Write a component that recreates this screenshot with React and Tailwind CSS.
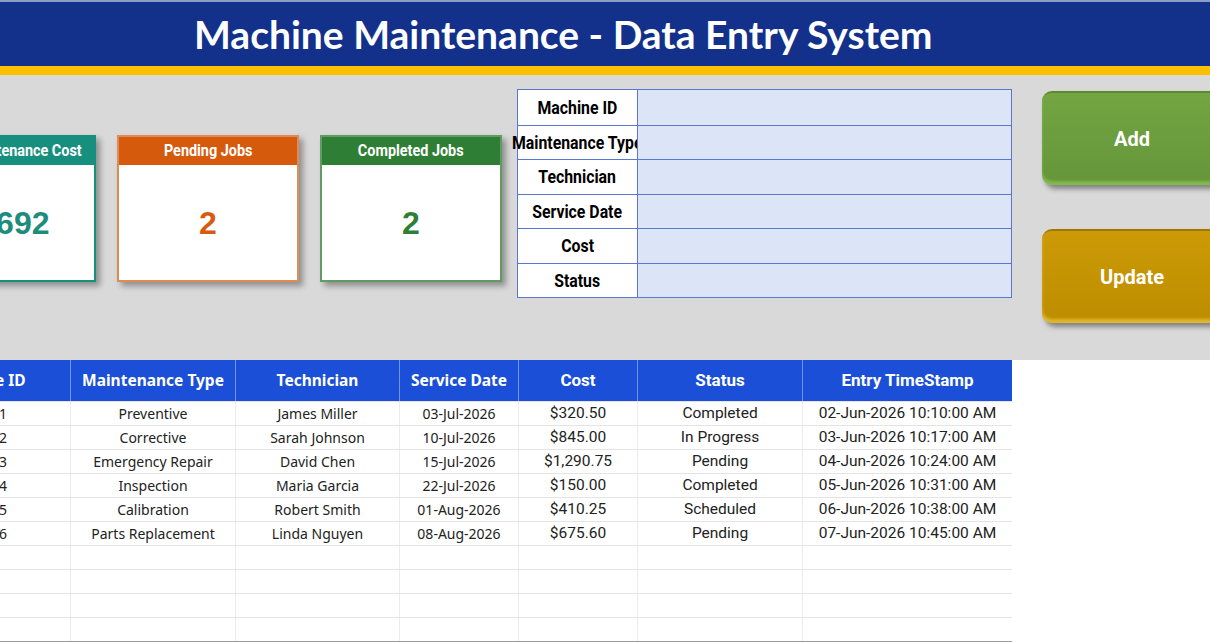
import React from "react"

const cards = [
  { title: "Total Maintenance Cost", value: "$3692", head: "bg-[#178f7e]", border: "border-[#178f7e]", text: "text-[#1e8c7c]" },
  { title: "Pending Jobs", value: "2", head: "bg-[#d65a0c]", border: "border-[#e08a55]", text: "text-[#d65a10]" },
  { title: "Completed Jobs", value: "2", head: "bg-[#2e7f35]", border: "border-[#5f9c64]", text: "text-[#2e7f35]" },
]

const fields = ["Machine ID", "Maintenance Type", "Technician", "Service Date", "Cost", "Status"]

const rows = [
  ["MC-001", "Preventive", "James Miller", "03-Jul-2026", "$320.50", "Completed", "02-Jun-2026 10:10:00 AM"],
  ["MC-002", "Corrective", "Sarah Johnson", "10-Jul-2026", "$845.00", "In Progress", "03-Jun-2026 10:17:00 AM"],
  ["MC-003", "Emergency Repair", "David Chen", "15-Jul-2026", "$1,290.75", "Pending", "04-Jun-2026 10:24:00 AM"],
  ["MC-004", "Inspection", "Maria Garcia", "22-Jul-2026", "$150.00", "Completed", "05-Jun-2026 10:31:00 AM"],
  ["MC-005", "Calibration", "Robert Smith", "01-Aug-2026", "$410.25", "Scheduled", "06-Jun-2026 10:38:00 AM"],
  ["MC-006", "Parts Replacement", "Linda Nguyen", "08-Aug-2026", "$675.60", "Pending", "07-Jun-2026 10:45:00 AM"],
  ["", "", "", "", "", "", ""],
  ["", "", "", "", "", "", ""],
  ["", "", "", "", "", "", ""],
  ["", "", "", "", "", "", ""],
]

const headers = ["Machine ID", "Maintenance Type", "Technician", "Service Date", "Cost", "Status", "Entry TimeStamp"]

const plex = "font-['Noto_Sans','Open_Sans',sans-serif]"
const narrow = "font-['Roboto','Liberation_Sans',sans-serif]"
const cols = "grid grid-cols-[176px_165px_164px_119px_119px_165px_210px]"

export default function App() {
  return (
    <div className="w-[1210px] h-[642px] overflow-hidden bg-white">
      {/* Title bar */}
      <div className="h-[66px] bg-[#13318a] border-t-2 border-[#8d9cc4] flex items-center pl-[194px]">
        <h1 className="text-white text-[39px] font-bold leading-none whitespace-nowrap font-['Lato','Noto_Sans',sans-serif]">
          Machine Maintenance - Data Entry System
        </h1>
      </div>
      <div className="h-[9px] bg-[#fdc000]" />

      {/* Dashboard area */}
      <div className="h-[285px] bg-[#d9d9d9] flex items-start ml-[-86px]">
        <div className="mt-[60px] flex gap-[21px] shrink-0">
          {cards.map((c) => (
            <div key={c.title} className={`w-[182px] h-[147px] shrink-0 bg-white border-2 ${c.border} shadow-[4px_4px_6px_rgba(0,0,0,0.35)] flex flex-col`}>
              <div className={`${c.head} h-[28px] flex items-center justify-center text-white text-[16px] font-bold whitespace-nowrap ${narrow}`}>
                <span className="inline-block scale-x-[0.9]">{c.title}</span>
              </div>
              <div className={`flex-1 flex items-center justify-center text-[32px] font-bold ${c.text} font-['Liberation_Sans',sans-serif]`}>
                {c.value}
              </div>
            </div>
          ))}
        </div>

        {/* Entry form */}
        <div className="mt-[14px] ml-[15px] w-[495px] shrink-0 border border-[#5a78d2]">
          {fields.map((f, i) => (
            <div key={f} className={`flex h-[34.5px] ${i > 0 ? "border-t border-[#5a78d2]" : ""}`}>
              <div className={`w-[119px] shrink-0 bg-white flex items-center justify-center whitespace-nowrap text-[18px] font-bold text-black ${narrow}`}>
                <span className="inline-block scale-x-[0.88]">{f}</span>
              </div>
              <div className="relative flex-1 bg-[#dce5f7] border-l border-[#5a78d2]" />
            </div>
          ))}
        </div>

        {/* Buttons */}
        <div className="mt-[16px] ml-[30px] shrink-0 flex flex-col gap-[44px]">
          <button className={`w-[190px] h-[94px] rounded-[10px] bg-gradient-to-b from-[#74a542] to-[#64953a] border-t-2 border-[#5c8a30] shadow-[inset_0_-4px_3px_rgba(150,210,90,0.6),3px_4px_5px_rgba(0,0,0,0.4)] text-white text-[20px] font-bold pr-[10px] ${narrow}`}>
            Add
          </button>
          <button className={`w-[190px] h-[94px] rounded-[10px] bg-gradient-to-b from-[#cc9a06] to-[#bd8d00] border-t-2 border-[#a27800] shadow-[inset_0_-4px_3px_rgba(240,200,60,0.7),3px_4px_5px_rgba(0,0,0,0.4)] text-white text-[20px] font-bold pr-[10px] ${narrow}`}>
            Update
          </button>
        </div>
      </div>

      {/* Records table */}
      <div className="ml-[-106px] w-[1118px] border-b-2 border-[#9a9a9a]">
        <div className={`${cols} h-[41px] bg-[#1b4fd7]`}>
          {headers.map((h, i) => (
            <div key={h} className={`flex items-center justify-center text-white font-bold whitespace-nowrap ${i > 0 ? "border-l border-[#6f93ee]" : ""} ${i < 4 ? `text-[15.5px] ${plex}` : `text-[17px] ${narrow}`}`}>
              {h}
            </div>
          ))}
        </div>
        {rows.map((r, ri) => (
          <div key={ri} className={`${cols} h-[24px] border-t border-[#e4e4e4]`}>
            {r.map((v, ci) => (
              <div key={ci} className={`flex items-center justify-center whitespace-nowrap text-[#222] ${ci > 0 ? "border-l border-[#ececec]" : ""} ${ci < 4 ? `text-[14px] ${plex}` : `text-[15.5px] ${narrow}`}`}>
                {v}
              </div>
            ))}
          </div>
        ))}
      </div>
    </div>
  )
}
